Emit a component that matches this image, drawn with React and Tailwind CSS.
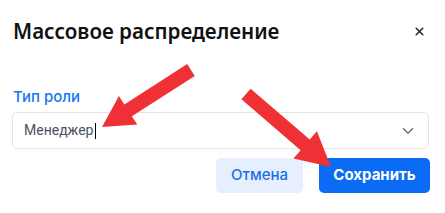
import { ChevronDown, X } from 'lucide-react';

// builds an arrow polygon from tail to tip
function arrowPoints([tx, ty], [hx, hy], shaft, headW, headL) {
  const dx = hx - tx;
  const dy = hy - ty;
  const len = Math.hypot(dx, dy);
  const ux = dx / len;
  const uy = dy / len;
  const px = -uy;
  const py = ux;
  const bx = hx - ux * headL;
  const by = hy - uy * headL;
  const pts = [
    [tx + px * shaft / 2, ty + py * shaft / 2],
    [bx + px * shaft / 2, by + py * shaft / 2],
    [bx + px * headW / 2, by + py * headW / 2],
    [hx, hy],
    [bx - px * headW / 2, by - py * headW / 2],
    [bx - px * shaft / 2, by - py * shaft / 2],
    [tx - px * shaft / 2, ty - py * shaft / 2],
  ];
  return pts.map((p) => p.join(',')).join(' ');
}

export default function App() {
  return (
    <div className="relative h-[213px] w-[445px] overflow-hidden bg-white font-['Inter',sans-serif]">
      {/* Header */}
      <div className="flex items-center justify-between pl-[13px] pr-[19px] pt-[17px]">
        <h1 className="font-['Noto_Sans',sans-serif] text-[20.6px] font-semibold leading-[28px] text-[#111]">
          Массовое распределение
        </h1>
        <X size={13} strokeWidth={3} className="text-[#1f2a3c]" />
      </div>

      {/* Field */}
      <div className="mt-[42px] px-[12px] pr-[16px]">
        <label className="block pl-px text-[15px] font-medium leading-[20px] text-[#1877f2]">Тип роли</label>
        <div className="mt-[5px] flex h-[37px] items-center justify-between rounded-[5px] border border-[#e3e5e8] pl-[11px] pr-[11px]">
          <span className="flex items-center font-['Roboto',sans-serif] text-[14px] text-[#4b5060]">
            Менеджер
            <span className="ml-[2px] inline-block h-[16px] w-px bg-black" />
          </span>
          <ChevronDown size={18} strokeWidth={2} className="text-[#6b7280]" />
        </div>
      </div>

      {/* Actions */}
      <div className="mt-[9px] flex justify-end gap-[16px] pr-[15px]">
        <button className="h-[35px] w-[87px] rounded-[5px] bg-[#e6effd] text-[15px] font-medium text-[#1a6fe8]">
          Отмена
        </button>
        <button className="h-[35px] w-[111px] rounded-[5px] bg-[#0a6cf4] text-[15px] font-bold text-white">
          Сохранить
        </button>
      </div>

      {/* Annotation arrows */}
      <svg className="pointer-events-none absolute inset-0" width="445" height="213">
        <polygon points={arrowPoints([191, 70], [102, 127], 14, 34, 31)} fill="#ef3035" />
        <polygon points={arrowPoints([246, 94], [331, 167], 14, 36, 34)} fill="#ef3035" />
      </svg>
    </div>
  );
}
